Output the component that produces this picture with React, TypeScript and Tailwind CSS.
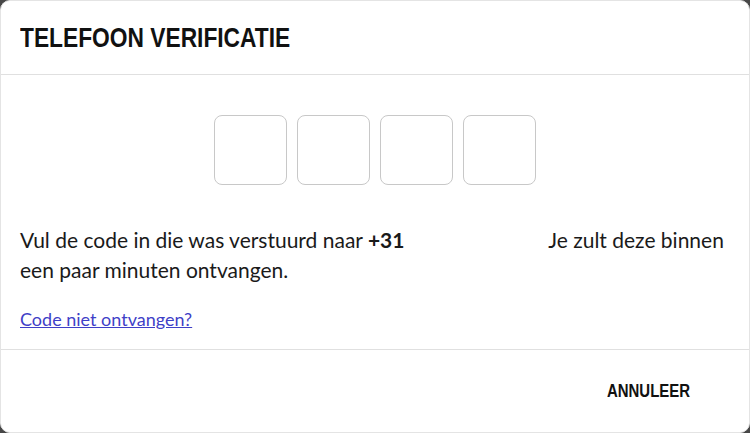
export default function App() {
  const heading = { fontFamily: '"Liberation Sans", Arial, sans-serif' };
  const body = { fontFamily: 'Lato, "Liberation Sans", sans-serif' };
  return (
    <div className="w-[750px] h-[433px] bg-[#474747]">
      <div className="flex h-full flex-col rounded-[10px] border border-[#e4e4e4] bg-white">
        <div className="flex h-[73px] items-center px-[19px]">
          {/* condensed bold heading */}
          <h1
            className="inline-block origin-left scale-x-[0.813] whitespace-nowrap text-[28px] font-bold leading-none text-[#111]"
            style={heading}
          >
            TELEFOON VERIFICATIE
          </h1>
        </div>
        <div className="flex flex-1 flex-col border-y border-[#e0e0e0] px-[19px]" style={body}>
          <div className="mt-[40px] flex justify-center gap-[10px]">
            {[0, 1, 2, 3].map((i) => (
              <input
                key={i}
                type="text"
                maxLength={1}
                className="h-[70px] w-[73px] rounded-[8px] border border-[#c8c8c8] bg-white text-center text-2xl outline-none"
              />
            ))}
          </div>
          <p className="mt-[40px] text-[21px] leading-[30px] text-[#1a1a1a]">
            Vul de code in die was verstuurd naar <strong className="font-bold">+31</strong>
            <span className="inline-block w-[139px]"></span> Je zult deze binnen een paar minuten ontvangen.
          </p>
          <a href="#" className="mt-[21px] self-start text-[18px] leading-[26px] text-[#3f3fc7] underline">
            Code niet ontvangen?
          </a>
        </div>
        <div className="flex h-[82px] items-center justify-end px-[59px]">
          <button
            className="inline-block origin-right scale-x-[0.83] whitespace-nowrap text-[18px] font-bold leading-none text-[#111]"
            style={heading}
          >
            ANNULEER
          </button>
        </div>
      </div>
    </div>
  );
}
